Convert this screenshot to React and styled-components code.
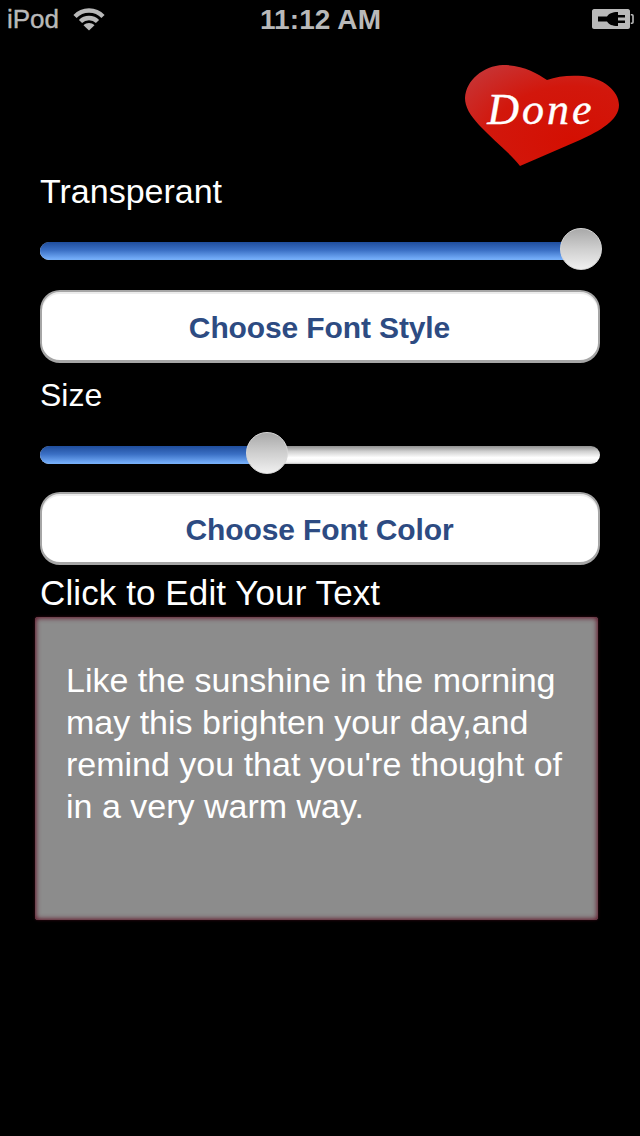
import React from 'react'
import styled, { createGlobalStyle } from 'styled-components'

const GlobalStyle = createGlobalStyle`
  html, body {
    margin: 0;
    padding: 0;
    background: #000;
  }
`

const Page = styled.div`
  width: 640px;
  height: 1136px;
  overflow: hidden;
  background: #000;
  font-family: "Liberation Sans", Arial, sans-serif;
  color: #fff;
`

const StatusBar = styled.div`
  display: grid;
  grid-template-columns: 1fr auto 1fr;
  align-items: center;
  height: 40px;
  padding: 0 6px 0 7px;
  box-sizing: border-box;
  color: #b9b9b9;
`

const StatusLeft = styled.div`
  display: flex;
  align-items: center;
  gap: 14px;
  margin-top: -2px;
  font-size: 26px;
  -webkit-text-stroke: 0.4px #b9b9b9;
`

const Clock = styled.div`
  font-size: 28px;
  font-weight: 700;
  letter-spacing: 0.1px;
`

const StatusRight = styled.div`
  display: flex;
  justify-content: flex-end;
  margin-top: -3px;
`

const Content = styled.div`
  display: flex;
  flex-direction: column;
  padding: 0 40px;
`

const HeaderRow = styled.div`
  display: flex;
  align-items: flex-end;
  justify-content: space-between;
  height: 171px;
  margin-right: -23px;
`

const Label = styled.div`
  font-size: ${p => p.$size}px;
  line-height: 40px;
  margin-top: ${p => p.$top || 0}px;
  letter-spacing: ${p => p.$spacing || 0}px;
`

const HeartWrap = styled.div`
  align-self: flex-start;
  margin-top: 25px;
`

const Track = styled.div`
  position: relative;
  height: 18px;
  border-radius: 9px;
  box-sizing: border-box;
  background: linear-gradient(#8f8f8f 0%, #cfcfcf 30%, #ffffff 65%, #f2f2f2 90%, #bdbdbd 100%);
`

const TrackFill = styled.div`
  height: 100%;
  border-radius: 9px 0 0 9px;
  background: linear-gradient(#1f4d9c 0%, #3a6fc4 45%, #6fa8f5 90%, #79b0f7 100%);
`

const Thumb = styled.div`
  position: absolute;
  top: -14px;
  width: 42px;
  height: 42px;
  margin-left: -21px;
  border-radius: 50%;
  box-sizing: border-box;
  border: 1px solid #d8d8d8;
  background: linear-gradient(#a9a9a9 0%, #cfcfcf 50%, #f0f0f0 100%);
`

const SliderRow = styled.div`
  margin-top: ${p => p.$top}px;
`

const ChooseButton = styled.div`
  display: flex;
  align-items: center;
  justify-content: center;
  height: 73px;
  margin-top: ${p => p.$top}px;
  padding: 3px 1px 0 0;
  box-sizing: border-box;
  border: 2px solid #a6a6a6;
  border-bottom-width: 3px;
  border-radius: 20px;
  background: #fff;
  box-shadow: inset 0 2px 0 #ececec;
  color: #2d4b82;
  font-size: 30px;
  font-weight: 700;
  letter-spacing: -0.12px;
`

const TextPanel = styled.div`
  width: 563px;
  height: 303px;
  margin: 4px 0 0 -5px;
  padding: 42px 20px 0 31px;
  box-sizing: border-box;
  background: #8c8c8c;
  border-radius: 3px;
  box-shadow: inset 0 0 5px 1px #5e1226, 0 0 3px #3a0a16;
  font-size: 34px;
  line-height: 42px;
`

const Slider = ({ percent, thumb }) => (
  <Track>
    <TrackFill style={{ width: `${percent}%` }} />
    <Thumb style={{ left: `${thumb}px` }} />
  </Track>
)

const Wifi = () => (
  <svg width="32" height="24" viewBox="0 0 32 24" fill="none" stroke="#b9b9b9" strokeWidth="4.4">
    <path d="M2 9.5C9.5 1.5 22.5 1.5 30 9.5" />
    <path d="M7.5 14.5C12 9.8 20 9.8 24.5 14.5" />
    <path d="M16 23.5L10.5 18.2C13.5 15.4 18.5 15.4 21.5 18.2Z" fill="#b9b9b9" stroke="none" />
  </svg>
)

const Battery = () => (
  <svg width="42" height="20" viewBox="0 0 42 20">
    <path d="M2 0H36C37 0 38 1 38 2V18C38 19 37 20 36 20H2C1 20 0 19 0 18V2C0 1 1 0 2 0Z" fill="#b9b9b9" />
    <path d="M38.8 5.8H40C40.6 5.8 41 6.2 41 6.8V13.2C41 13.8 40.6 14.2 40 14.2H38.8" fill="none" stroke="#b9b9b9" strokeWidth="1.6" />
    <path d="M6 7.5H15C17 4.5 20 3 26 3V6H33V8.5H26V11.5H33V14H26V17C20 17 17 15.5 15 12.5H6Z" fill="#000" />
  </svg>
)

const Heart = () => (
  <svg width="158" height="104" viewBox="0 0 158 104">
    <defs>
      <radialGradient id="heartFill" cx="0.7" cy="0.75" r="0.9">
        <stop offset="0" stopColor="#d40f02" />
        <stop offset="0.6" stopColor="#d2170c" />
        <stop offset="1" stopColor="#c83232" />
      </radialGradient>
    </defs>
    <path
      d="M38 0C58 0 72 8 82 15C92 11 105 10 118 11C138 13 154 26 154 40C154 55 135 66 115 75C95 84 75 92 55 101C45 88 28 75 14 60C5 50 0 42 0 33C1 15 18 1 38 0Z"
      fill="url(#heartFill)"
    />
    <text
      x="76" y="59" textAnchor="middle"
      fontFamily="'Liberation Serif', serif" fontStyle="italic"
      fontSize="44" letterSpacing="3" fill="#fff" stroke="#fff" strokeWidth="0.4"
    >
      Done
    </text>
  </svg>
)

export default function App() {
  return (
    <Page>
      <GlobalStyle />
      <StatusBar>
        <StatusLeft>iPod <Wifi /></StatusLeft>
        <Clock>11:12 AM</Clock>
        <StatusRight><Battery /></StatusRight>
      </StatusBar>
      <Content>
        <HeaderRow>
          <Label $size={34}>Transperant</Label>
          <HeartWrap><Heart /></HeartWrap>
        </HeaderRow>
        <SliderRow $top={31}><Slider percent={96.5} thumb={541} /></SliderRow>
        <ChooseButton $top={30}>Choose Font Style</ChooseButton>
        <Label $size={32} $top={12}>Size</Label>
        <SliderRow $top={31}><Slider percent={40} thumb={227} /></SliderRow>
        <ChooseButton $top={28}>Choose Font Color</ChooseButton>
        <Label $size={35} $top={8} $spacing={0.1}>Click to Edit Your Text</Label>
        <TextPanel>
          Like the sunshine in the morning<br />
          may this brighten your day,and<br />
          remind you that you're thought of<br />
          in a very warm way.
        </TextPanel>
      </Content>
    </Page>
  )
}
